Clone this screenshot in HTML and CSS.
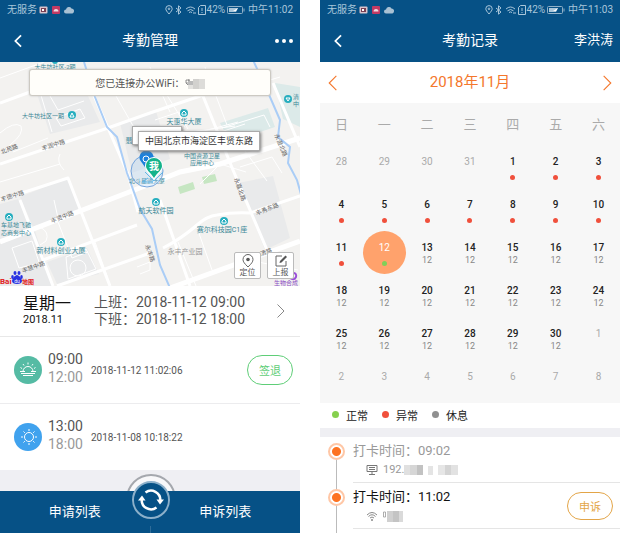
FILE: index.html
```html
<!DOCTYPE html>
<html lang="zh-CN">
<head>
<meta charset="utf-8">
<meta name="viewport" content="width=device-width, initial-scale=1">
<title>考勤管理</title>
<link rel="stylesheet" href="styles.css">
</head>
<body>
<svg class="defs" aria-hidden="true">
  <symbol id="i-status-left" viewBox="0 0 36 10">
    <rect x="0.5" y="1.5" width="8" height="7" rx="1" fill="#d9c4cc"/><rect x="2" y="3" width="5" height="4" fill="#7a4054"/><path d="M3 4h2v2H3z" fill="#fff"/>
    <rect x="13" y="1" width="8" height="8" rx="1" fill="#c23a63"/><path d="M14.500 6.500a2.500 2.500 0 0 1 5 0z" fill="#f2dbe3"/>
    <path d="M27 8.500a2 2 0 0 1 0-4 3 3 0 0 1 5.500-1 2.600 2.600 0 0 1 1 5z" fill="#a9c1d3"/>
  </symbol>
  <symbol id="i-status-right" viewBox="0 0 42 10">
    <g fill="none" stroke="#a9c6da" stroke-width="1">
      <path d="M4 9C2 6.500 .8 5.200.8 3.800a3.200 3.200 0 0 1 6.400 0C7.200 5.200 6 6.500 4 9z"/><circle cx="4" cy="3.800" r=".8"/>
      <path d="M11 3l5 4-2.500 2.200V.8L16 3l-5 4"/>
      <path d="M21 4q4.500-4 9 0M22.500 5.800q3-2.600 6 0M24 7.500q1.500-1.200 3 0"/><path d="M28 8h3"/>
      <path d="M33.500 9.500v-7l2-2h5v9zM37 3v3M37 7v1"/>
    </g>
  </symbol>
  <symbol id="i-battery" viewBox="0 0 18 8">
    <rect x=".5" y=".5" width="15" height="7" rx="1" fill="none" stroke="#8fb0c8"/><path d="M2 2h9l-2 4H2z" fill="#a9c6da"/><path d="M6 5l5-3-2 3z" fill="#fff"/><path d="M17 2.500v3" stroke="#8fb0c8"/>
  </symbol>
  <symbol id="i-left" viewBox="0 0 10 16"><path d="M8.500 1.500L2 8l6.500 6.500" fill="none" stroke="currentColor"/></symbol>
  <symbol id="i-right" viewBox="0 0 10 16"><path d="M1.500 1.500L8 8l-6.500 6.500" fill="none" stroke="currentColor"/></symbol>
</svg>
<div class="app">
  <section class="phone">
    <header class="topbar">
      <div class="status">
        <span>无服务</span><svg class="status-left"><use href="#i-status-left"/></svg>
        <svg class="status-right"><use href="#i-status-right"/></svg><span>42%</span><svg class="battery"><use href="#i-battery"/></svg><span>中午11:02</span>
      </div>
      <div class="nav">
        <button class="icon-btn back" aria-label="返回"><svg><use href="#i-left"/></svg></button>
        <h1>考勤管理</h1>
        <button class="icon-btn more" aria-label="更多"><i></i><i></i><i></i></button>
      </div>
    </header>

    <div class="map">
      <svg class="map-art" viewBox="0 0 300 224" preserveAspectRatio="xMidYMid slice">
        <rect width="300" height="224" fill="#f3f2f0"/>
        <g fill="#e9eaeb">
          <path d="M37 32h50l13 28-50 12zM120 61l36-12 14 48-38 14zM20 135l47-19 13 32-47 17zM0 142l18-5 13 30-31 10zM0 182l35-13 18 55H0zM238 121l35-7 17 62-25 12zM57 222l-10-22 40-14 12 26z"/>
        </g>
        <path d="M220 61l48-15 7 19-45 15zM275 21l25 4v40l-17-8z" fill="#dceae9"/>
        <path d="M178 125l15-5 2 7-15 5zM202 115l13-3 2 7-13 3z" fill="#c6e6c2"/>
        <g fill="none" stroke="#fff" stroke-width="1">
          <path d="M50 34l8 14 26-9M56 56l24-9 5 9-24 8zM0 71q14-12 21-7 3 8-10 18l-8 8M40 30l12 40M0 120l60-18M13 90l35-14M60 92q-4 8 4 16"/>
          <path d="M12 186l20-7 8 24M12 186l7 20 20-5M40 165q10 5 6 14l-6 4M58 160l14 36 16-6M54 138l4 18M66 195l20-8 10 20-28 10z"/><circle cx="78" cy="206" r="8"/>
          <path d="M137 205l13-5v8l-10 4M155 58l24-8 6 16-26 10M222 66l42-13 6 12M190 80l55-18M240 105l32-10 10 16M200 122l20-20 26 8M150 30l55-14M205 5l22 58M230 30l50-15M175 72l60-8M108 20l40 70M150 5l20 45M258 200l40 8M272 190l10 30M178 180l18 44M196 163l16 45M242 85l25 34M200 70l38-10M160 22l28 45M0 16l44-16M95 180l12 34"/>
        </g>
        <g fill="none" stroke="#fff" stroke-width="3" stroke-linejoin="round">
          <path d="M0 102l105-35 45-16 118-40M88 20l40 92 10 38M0 41l30-11M0 138l68-22 42 108M20 138l33 86M43 198l94-35M57 224l93-33"/>
          <path d="M160 138l30 86M163 186q18-9 34-23 10-9 20-10 16-3 33-2l50-17M203 34l30 74 37 87M273 21l27 64"/>
        </g>
        <path d="M0 180l150-58 30-12 40-8 80-26M170 226l130-47" fill="none" stroke="#fff" stroke-width="5"/>
        <path d="M84 0l11 35 12 30 10 10 10 36 3 8 10 28 12 20 8 36 10 23M253-2l17 37 10 23-2 17 12 10-2 16 9 17 5 18" fill="none" stroke="#aacdf6" stroke-width="2"/>
        <g fill="#26aebf"><circle cx="55" cy="-1" r="3"/><circle cx="72" cy="53" r="4"/><circle cx="184" cy="51" r="4"/><circle cx="288" cy="37" r="4"/><circle cx="9" cy="155" r="4"/><circle cx="61" cy="180" r="4"/><circle cx="156" cy="140" r="4"/><circle cx="224" cy="159" r="4"/></g>
        <g fill="none" stroke="#fff"><path d="M70 55l2-4 2 4zM182 53v-2l2-2 2 2v2zM7 157v-2l2-2 2 2v2zM59 182v-2l2-2 2 2v2zM154 142v-2l2-2 2 2v2zM222 161v-2l2-2 2 2v2zM286 36h4l-2 3z"/></g>
        <g class="poi">
          <text class="long" x="55" y="7">大牛坊社区-2期</text><text class="long" x="43" y="56">大牛坊社区一期</text><text x="184" y="62">天惠华大厦</text>
          <text class="long" x="202" y="96">中国资源卫星</text><text class="long" x="202" y="103">应用中心</text><text x="129" y="81">翡</text><text class="long" x="147" y="121">北斗星通大厦</text>
          <text class="long" x="16" y="165">车基地飞驰</text><text class="long" x="16" y="173">芯商务中心</text><text x="61" y="191">新材料创业大厦</text>
          <text x="156" y="151">航天软件园</text><text x="222" y="170">赛尔科技园C1座</text><text class="long" x="296" y="37">清</text><text class="long" x="296" y="44">中</text>
        </g>
        <text class="area" x="185" y="192">永丰产业园</text>
        <g class="road">
          <text transform="translate(54 85) rotate(-18)">丰润中路</text><text transform="translate(10 89) rotate(-22)">北苑路</text>
          <text transform="translate(13 136) rotate(-18)">丰德中路</text><text transform="translate(63 157) rotate(-21)">丰贤中路</text>
          <text transform="translate(34 207) rotate(-20)">丰慧中路</text><text transform="translate(268 149) rotate(-22)">丰秀东路</text>
          <text transform="translate(238 128) rotate(70)">永嘉北路</text><text transform="translate(279 84) rotate(67)">永澄北路</text>
          <text transform="translate(148 192) rotate(70)">永丰路</text><text transform="translate(264 193) rotate(-18)">北清路</text>
        </g>
        <path d="M290 216q4 3 6-1 1-4-3-4" fill="none" stroke="#9a4fd8" stroke-width="2"/><text class="poi purple long" x="286" y="223">生物合成</text>
        <circle cx="147" cy="109" r="16" fill="#a9cff5" fill-opacity=".3" stroke="#74a4dc" stroke-width="1"/>
        <path d="M140 98a7 7 0 1 1 13 0l-6 10z" fill="#1c81dc"/><circle cx="146" cy="97" r="3" fill="none" stroke="#fff"/>
        <path d="M145 110l9 9 9-9M148 116l-6 4h11" fill="none" stroke="#62b6e6" stroke-width="1"/>
        <path d="M145 104a9 9 0 1 1 18 0c0 5-5 8-9 14-4-6-9-9-9-14z" fill="#fff"/>
        <path d="M146 104a8 8 0 1 1 16 0c0 4-5 7-8 12-3-5-8-8-8-12z" fill="#14b38b"/><text class="me" x="154" y="108">我</text>
        <g class="baidu"><text x="0" y="222">Bai</text><text class="ditu" x="22" y="222">地图</text></g>
        <g fill="#2932e1"><path d="M17 213c2 0 5 4 5 6s-2 3-5 3-5-1-5-3 3-6 5-6z"/><ellipse cx="15" cy="211" rx="1.500" ry="2"/><ellipse cx="19" cy="211" rx="1.500" ry="2"/><ellipse cx="12.500" cy="215" rx="1.300" ry="2"/><ellipse cx="21.500" cy="215" rx="1.300" ry="2"/></g>
        <text class="du" x="17" y="221">du</text>
      </svg>
      <div class="wifi">您已连接办公WiFi：<svg class="mosaic" viewBox="0 0 20 12"><path d="M1 3h3v3H1zM1 6l3 3M4 2v7" stroke="#777" stroke-width=".8" fill="none"/><path d="M3 4h5v4H3z" fill="#bbb"/><path d="M8 2h6v10H8z" fill="#d2d1ce"/><path d="M14 2h6v10h-6z" fill="#dddcd9"/><path d="M3 8h5v4H3z" fill="#e3e2df"/></svg></div>
      <div class="tip-back"></div>
      <div class="tip">中国北京市海淀区丰贤东路</div>
      <div class="map-actions">
        <button><svg viewBox="0 0 14 14"><path d="M7 13C3.500 9.500 2 7.800 2 5.500a5 5 0 0 1 10 0C12 7.800 10.500 9.500 7 13z" fill="none" stroke="#666"/><circle cx="7" cy="5.500" r="1.800" fill="#555"/></svg>定位</button>
        <button><svg viewBox="0 0 14 14"><path d="M8 2H2v10h10V7" fill="none" stroke="#666"/><path d="M5.500 9l.5-2 5.500-5.500 1.500 1.500L7.500 8.500z" fill="#555"/></svg>上报</button>
      </div>
    </div>

    <a class="summary" href="#day">
      <span class="day"><strong>星期一</strong><small>2018.11</small></span>
      <span class="shift"><span>上班：2018-11-12 09:00</span><span>下班：2018-11-12 18:00</span></span>
      <svg class="go"><use href="#i-right"/></svg>
    </a>
    <div class="punch">
      <svg class="badge" viewBox="0 0 28 28"><circle cx="14" cy="14" r="14" fill="#55bba4"/><g fill="none" stroke="#fff"><path d="M9 15.500a5 5 0 0 1 10 0M6 15.500h5M17 15.500h5M7 17.500h14M9 19.500h10M14 6.500v2M9 8l1 1.500M19 8l-1 1.500M6.500 11.500l1.500 1M21.500 11.500l-1.500 1"/></g></svg>
      <div class="hours"><span>09:00</span><span class="end">12:00</span></div>
      <time>2018-11-12 11:02:06</time>
      <button class="pill green">签退</button>
    </div>
    <div class="punch">
      <svg class="badge" viewBox="0 0 28 28"><circle cx="14" cy="14" r="14" fill="#40a2ee"/><g fill="none" stroke="#fff"><circle cx="15" cy="14" r="4.500"/><path d="M15 6v2M15 20v2M7 14h2M21 14h2M9.500 8.500l1.300 1.300M19.200 18.200l1.300 1.300M9.500 19.500l1.300-1.300M19.200 9.800l1.300-1.300"/></g></svg>
      <div class="hours"><span>13:00</span><span class="end">18:00</span></div>
      <time>2018-11-08 10:18:22</time>
    </div>
    <footer class="tabs">
      <a href="#apply">申请列表</a><a href="#appeal">申诉列表</a>
      <button class="sync" aria-label="刷新"><svg viewBox="0 0 54 54">
        <circle cx="27" cy="27" r="24" fill="#f8f8fa" stroke="#a5a8ae" stroke-width="2"/><path d="M0 19h54v35H0z" fill="#065186"/>
        <circle cx="27" cy="28" r="18" fill="#065186" stroke="#8cb0ca" stroke-width="2"/>
        <g fill="none" stroke="#fff" stroke-width="2.500"><path d="M21.500 20.500a9.300 9.300 0 0 1 14.800 8M32.500 35.500a9.300 9.300 0 0 1-14.800-8"/></g><path d="M32.500 27.500h7.500l-4 5zM14 28.500h7.500l-3.500-5z" fill="#fff"/>
      </svg></button>
    </footer>
  </section>

  <section class="phone">
    <header class="topbar">
      <div class="status">
        <span>无服务</span><svg class="status-left"><use href="#i-status-left"/></svg>
        <svg class="status-right"><use href="#i-status-right"/></svg><span>42%</span><svg class="battery"><use href="#i-battery"/></svg><span>中午11:03</span>
      </div>
      <div class="nav">
        <button class="icon-btn back" aria-label="返回"><svg><use href="#i-left"/></svg></button>
        <h1>考勤记录</h1>
        <span class="user">李洪涛</span>
      </div>
    </header>
    <div class="month">
      <button class="icon-btn" aria-label="上个月"><svg><use href="#i-left"/></svg></button>
      <h2>2018年11月</h2>
      <button class="icon-btn" aria-label="下个月"><svg><use href="#i-right"/></svg></button>
    </div>
    <table class="calendar">
      <thead><tr><th>日</th><th>一</th><th>二</th><th>三</th><th>四</th><th>五</th><th>六</th></tr></thead>
      <tbody>
        <tr><td class="out">28</td><td class="out">29</td><td class="out">30</td><td class="out">31</td><td>1<i></i></td><td>2<i></i></td><td>3<i></i></td></tr>
        <tr><td>4<i></i></td><td>5<i></i></td><td>6<i></i></td><td>7<i></i></td><td>8<i></i></td><td>9<i></i></td><td>10<i></i></td></tr>
        <tr><td>11<i></i></td><td class="selected"><span>12<i class="ok"></i></span></td><td>13<small>12</small></td><td>14<small>12</small></td><td>15<small>12</small></td><td>16<small>12</small></td><td>17<small>12</small></td></tr>
        <tr><td>18<small>12</small></td><td>19<small>12</small></td><td>20<small>12</small></td><td>21<small>12</small></td><td>22<small>12</small></td><td>23<small>12</small></td><td>24<small>12</small></td></tr>
        <tr><td>25<small>12</small></td><td>26<small>12</small></td><td>27<small>12</small></td><td>28<small>12</small></td><td>29<small>12</small></td><td>30<small>12</small></td><td class="out">1</td></tr>
        <tr><td class="out">2</td><td class="out">3</td><td class="out">4</td><td class="out">5</td><td class="out">6</td><td class="out">7</td><td class="out">8</td></tr>
      </tbody>
    </table>
    <ul class="legend"><li class="normal">正常</li><li class="abnormal">异常</li><li class="rest">休息</li></ul>
    <ol class="records">
      <li class="past">
        <div class="record">
          <div>
            <p>打卡时间：09:02</p>
            <p class="via"><svg class="via-icon" viewBox="0 0 12 12"><path d="M1 1.500h10v6H1zM3 3.500h6M3 5.500h6M6 8v2M3 10.500h6" fill="none" stroke="#777"/></svg>192.<svg class="mosaic wide" viewBox="0 0 54 12"><path d="M0 1h6v10H0z" fill="#e0e0e0"/><path d="M6 1h7v10H6z" fill="#d6d6d6"/><path d="M13 1h6v10h-6z" fill="#c2c2c2"/><path d="M24 2h5v9h-5z" fill="#e4e4e4"/><path d="M34 1h7v10h-7z" fill="#e6e6e6"/><path d="M41 1h6v10h-6z" fill="#d4d4d4"/><path d="M47 1h7v10h-7z" fill="#e2e2e2"/></svg></p>
          </div>
        </div>
      </li>
      <li>
        <div class="record">
          <div>
            <p>打卡时间：11:02</p>
            <p class="via"><svg class="via-icon" viewBox="0 0 12 12"><path d="M1 5q5-5 10 0M2.500 6.500q3.500-3.500 7 0M4 8q2-2 4 0" fill="none" stroke="#888"/><circle cx="6" cy="10" r="1" fill="#888"/></svg><svg class="mosaic" viewBox="0 0 20 12"><path d="M.5 2h2v5h-2z" fill="none" stroke="#999" stroke-width=".8"/><path d="M4 1h6v11H4z" fill="#d0d0d0"/><path d="M10 1h6v11h-6z" fill="#c4c4c4"/><path d="M16 1h5v11h-5z" fill="#dadada"/></svg></p>
          </div>
          <button class="pill amber">申诉</button>
        </div>
      </li>
      <li class="next"></li>
    </ol>
  </section>
</div>
</body>
</html>
```
FILE: styles.css
```css
*, *::before, *::after { box-sizing: border-box; }
body { margin: 0; background: #fff; font-family: Roboto, "Noto Sans CJK SC", sans-serif; color: #111; }
h1, h2, p, ul, ol { margin: 0; padding: 0; font-weight: 400; list-style: none; }
button { padding: 0; border: 0; background: none; font: inherit; color: inherit; }
a { color: inherit; text-decoration: none; }
svg { display: block; flex: none; }
.defs { position: absolute; width: 0; height: 0; }

.app { display: grid; grid-template-columns: 1fr 1fr; gap: 20px; height: 100vh; overflow: hidden; }
.phone { display: flex; flex-direction: column; min-width: 0; overflow: hidden; }

.topbar { background: #065186; color: #fff; flex: none; }
.status { display: flex; align-items: center; height: 20px; padding: 0 7px; font-size: 10px; line-height: 20px; color: #a9c6da; }
.status-left { width: 36px; height: 10px; margin: 0 auto 0 2px; }
.status-right { width: 42px; height: 10px; }
.battery { width: 18px; height: 8px; margin: 0 3px 0 2px; }
.nav { display: grid; grid-template-columns: 1fr auto 1fr; align-items: center; height: 42px; padding: 0 7px; }
.nav h1 { padding-bottom: 2px; font-size: 14px; line-height: 40px; }
.icon-btn svg { width: 10px; height: 16px; stroke-width: 1px; }
.icon-btn.back { justify-self: start; margin-left: 6px; }
.icon-btn.back svg { height: 14px; stroke-width: 2px; }
.more { display: flex; gap: 3px; justify-self: end; }
.more i { width: 4px; height: 4px; border-radius: 50%; background: #fff; }
.user { justify-self: end; padding-bottom: 2px; font-size: 13px; line-height: 40px; }

.map { position: relative; flex: none; height: 224px; overflow: hidden; }
.map-art { width: 100%; height: 100%; }
.map-art text { font-size: 7px; }
.map-art text.long { font-size: 6px; }
.poi { fill: #3a8796; text-anchor: middle; }
.poi.purple { fill: #8a4fc4; }
.area { fill: #999; text-anchor: middle; }
.road { fill: #666; text-anchor: middle; }
.map-art .road text { font-size: 6px; }
.map-art .me { font-size: 10px; font-weight: 700; fill: #fff; text-anchor: middle; }
.map-art .baidu text { font-size: 8px; font-weight: 700; fill: #e1201c; }
.map-art .baidu .ditu { font-size: 6px; }
.map-art .du { font-size: 5px; fill: #fff; text-anchor: middle; }
.wifi { position: absolute; top: 7px; left: 29px; right: 29px; display: flex; align-items: center; justify-content: center; height: 27px; border: 1px solid #ccc9c2; border-radius: 3px; background: #fffefa; box-shadow: 0 0 2px #bbb; font-size: 10px; color: #555; }
.mosaic { width: 20px; height: 12px; }
.mosaic.wide { width: 54px; }
.tip, .tip-back { position: absolute; background: #fff; border: 1px solid #aaa; box-shadow: 1px 1px 3px #777; }
.tip-back { top: 64px; left: calc(50% - 18px); width: 50px; height: 19px; }
.tip { top: 69px; left: calc(50% - 12px); padding: 0 6px; font-size: 9px; line-height: 18px; color: #333; white-space: nowrap; }
.map-actions { position: absolute; right: 6px; bottom: 7px; display: flex; gap: 6px; }
.map-actions button { display: flex; flex-direction: column; align-items: center; width: 27px; height: 27px; padding-top: 1px; border: 1px solid #bbb; border-radius: 2px; background: #fff; font-size: 8px; line-height: 10px; color: #555; }
.map-actions svg { width: 14px; height: 14px; }

.summary { display: flex; align-items: center; flex: none; height: 51px; padding: 0 14px 0 23px; border-bottom: 1px solid #e8e8e8; }
.day { display: flex; flex-direction: column; width: 71px; }
.day strong { font-size: 16px; font-weight: 400; line-height: 18px; }
.day small { font-size: 11px; line-height: 14px; }
.shift { display: flex; flex-direction: column; font-size: 14px; line-height: 17px; color: #555; white-space: nowrap; }
.go { width: 10px; height: 16px; margin-left: auto; color: #888; }
.punch { display: flex; align-items: center; flex: none; height: 67px; padding: 0 7px 0 14px; border-bottom: 1px solid #ececee; }
.badge { width: 28px; height: 28px; margin-right: 6px; }
.hours { display: flex; flex-direction: column; width: 43px; padding-bottom: 4px; font-size: 14px; line-height: 18px; color: #555; }
.hours .end { color: #999; }
.punch time { font-size: 10px; color: #555; }
.pill { width: 46px; height: 30px; margin-left: auto; border: 1px solid; border-radius: 15px; font-size: 11px; }
.pill.green { color: #5fce78; }
.pill.amber { height: 28px; color: #e3a548; }
.tabs { position: relative; display: flex; align-items: stretch; height: 42px; margin-top: auto; background: #065186; color: #fff; box-shadow: 0 -21px 0 #efeff3; }
.tabs a { flex: 1; text-align: center; font-size: 13px; line-height: 42px; }
.tabs a + a { border-left: 1px solid #2e6c99; }
.sync { position: absolute; left: calc(50% - 26px); top: -19px; }
.sync svg { width: 54px; height: 54px; }

.month { display: flex; align-items: center; justify-content: space-between; flex: none; height: 41px; padding: 0 7px; color: #f4772c; }
.month svg { width: 11px; height: 18px; }
.month h2 { font-size: 15px; line-height: 41px; }
.calendar { width: 100%; flex: none; table-layout: fixed; border-spacing: 0; background: #f7f7f7; text-align: center; }
.calendar th { height: 42px; padding: 0 0 2px; font-size: 13px; font-weight: 400; color: #aaa; }
.calendar td { height: 43px; padding: 10px 0 0; vertical-align: top; font-size: 10px; line-height: 14px; font-weight: 500; color: #222; }
.calendar td.out { font-weight: 400; color: #aaa; }
.calendar i { display: block; width: 5px; height: 5px; margin: 6px auto 0; border-radius: 50%; background: #f0503c; }
.calendar small { display: block; font-size: 9px; line-height: 11px; font-weight: 400; color: #888; }
.calendar td.selected { padding: 0; color: #fff; font-weight: 400; }
.selected span { display: block; width: 43px; height: 43px; margin: 0 auto; padding-top: 10px; border-radius: 50%; background: #ffa26c; }
.calendar i.ok { background: #7fd058; }
.legend { display: flex; align-items: center; flex: none; gap: 14px; height: 25px; padding: 0 0 2px 12px; font-size: 11px; color: #222; }
.legend li { display: flex; align-items: center; gap: 7px; }
.legend li::before { content: ""; width: 7px; height: 7px; border-radius: 50%; background: #909090; }
.legend .normal::before { background: #86d04e; }
.legend .abnormal::before { background: #f0503c; }
.records { flex: 1; min-height: 0; border-top: 9px solid #efeff3; overflow: hidden; }
.records li { position: relative; padding-left: 33px; font-size: 13px; }
.records li::before { content: ""; position: absolute; left: 16px; top: 0; bottom: 0; width: 1px; background: #bbb; }
.records li:first-child::before { top: 14px; }
.records li:not(.next)::after { content: ""; position: absolute; left: 8px; top: 6px; width: 17px; height: 17px; border: 2px solid #ffc7a6; border-radius: 50%; background: radial-gradient(circle, #fd7322 4px, #fff 5px); }
.record { display: flex; align-items: center; justify-content: space-between; height: 46px; padding-right: 7px; border-bottom: 1px solid #e5e5e5; }
.record p { line-height: 20px; }
.past { color: #999; }
.record .via { display: flex; align-items: center; height: 17px; padding-left: 13px; font-size: 11px; line-height: 17px; color: #999; }
.via-icon { width: 12px; height: 12px; margin-right: 5px; }
.records .next { height: 46px; }
```
